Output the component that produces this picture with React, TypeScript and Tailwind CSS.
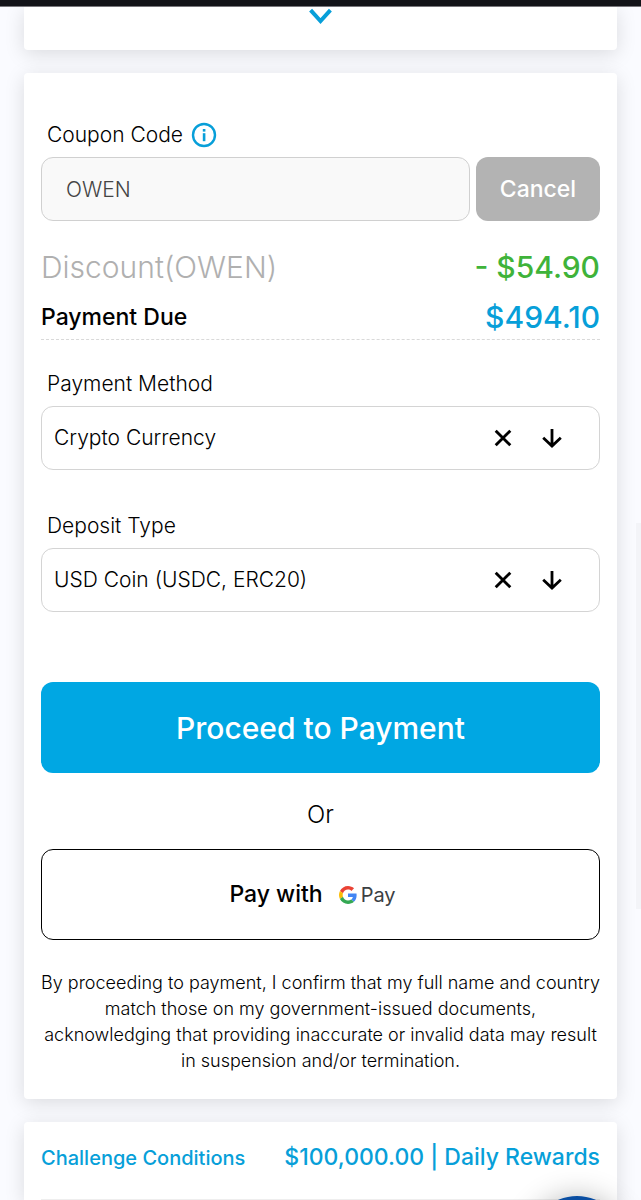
import React, { useState } from "react";

function ChevronDown() {
  return (
    <svg width="26" height="18" viewBox="0 0 26 18" fill="none" aria-hidden="true">
      <path d="M2.6 3.2 L12.5 14 L22.4 3.2" stroke="#079fd9" strokeWidth="4" />
    </svg>
  );
}

function InfoIcon() {
  return (
    <svg width="26" height="26" viewBox="0 0 26 26" fill="none" aria-hidden="true">
      <circle cx="13" cy="13" r="11" stroke="#079fd9" strokeWidth="2.4" />
      <rect x="11.8" y="11.2" width="2.6" height="8" fill="#079fd9" />
      <rect x="11.8" y="7" width="2.6" height="2.6" fill="#079fd9" />
    </svg>
  );
}

function CloseIcon() {
  return (
    <svg width="20" height="20" viewBox="0 0 20 20" fill="none" aria-hidden="true">
      <path d="M2.7 2.7 L17.3 17.3 M17.3 2.7 L2.7 17.3" stroke="#000" strokeWidth="2.9" />
    </svg>
  );
}

function ArrowDownIcon() {
  return (
    <svg width="20" height="20" viewBox="0 0 20 20" fill="none" aria-hidden="true">
      <path d="M10 1 V18 M1.2 9.8 L10 18 L18.8 9.8" stroke="#000" strokeWidth="2.8" />
    </svg>
  );
}

function GoogleG() {
  return (
    <svg width="18" height="18" viewBox="0 0 48 48" aria-hidden="true">
      <path fill="#EA4335" d="M24 9.5c3.54 0 6.71 1.22 9.21 3.6l6.85-6.85C35.9 2.38 30.47 0 24 0 14.62 0 6.51 5.38 2.56 13.22l7.98 6.19C12.43 13.72 17.74 9.5 24 9.5z" />
      <path fill="#4285F4" d="M46.98 24.55c0-1.57-.15-3.09-.38-4.55H24v9.02h12.94c-.58 2.96-2.26 5.48-4.78 7.18l7.73 6c4.51-4.18 7.09-10.36 7.09-17.65z" />
      <path fill="#FBBC05" d="M10.53 28.59c-.48-1.45-.76-2.99-.76-4.59s.27-3.14.76-4.59l-7.98-6.19C.92 16.46 0 20.12 0 24c0 3.88.92 7.54 2.56 10.78l7.97-6.19z" />
      <path fill="#34A853" d="M24 48c6.48 0 11.93-2.13 15.89-5.81l-7.73-6c-2.15 1.45-4.92 2.3-8.16 2.3-6.26 0-11.57-4.22-13.47-9.91l-7.98 6.19C6.51 42.62 14.62 48 24 48z" />
    </svg>
  );
}

type PickerProps = { id: string; label: string; options: string[] };

function Picker({ id, label, options }: PickerProps) {
  const [value, setValue] = useState(options[0]);
  return (
    <div>
      <label htmlFor={id} className="block px-1.5 text-[21px] leading-7 font-light">
        {label}
      </label>
      <div className="mt-2 flex h-16 items-center rounded-xl border border-[#d4d4d4] pr-[37px]">
        <select
          id={id}
          value={value}
          onChange={(e) => setValue(e.target.value)}
          className="h-full min-w-0 flex-1 appearance-none bg-transparent pl-3 text-[21px] font-light outline-none"
        >
          <option value="" />
          {options.map((o) => (
            <option key={o}>{o}</option>
          ))}
        </select>
        <button type="button" aria-label={`Clear ${label}`} onClick={() => setValue("")}>
          <CloseIcon />
        </button>
        <span className="pointer-events-none ml-[29px]">
          <ArrowDownIcon />
        </span>
      </div>
    </div>
  );
}

const card = "rounded bg-white shadow-[0_4px_20px_rgba(0,0,0,0.13)]";

export default function App() {
  const [coupon, setCoupon] = useState("OWEN");
  return (
    <div className="relative flex min-h-screen flex-col overflow-hidden bg-[#fafbff] font-['Inter','Liberation_Sans',sans-serif] text-black">
      <header className="relative z-10 h-[7px] border-b border-[#77767b] bg-[#121318]" />

      <main className="flex flex-1 flex-col gap-[23px] px-6">
        <section className="flex h-[43px] justify-center rounded-b bg-white shadow-[0_4px_20px_rgba(0,0,0,0.13)]">
          <button type="button" aria-label="Expand" className="h-[18px]">
            <ChevronDown />
          </button>
        </section>

        <section className={`${card} px-[17px] pt-12 pb-[25px]`}>
          <div className="flex items-center gap-2 px-1.5">
            <label htmlFor="coupon" className="text-[21px] leading-7 font-light">
              Coupon Code
            </label>
            <button type="button" aria-label="Coupon information">
              <InfoIcon />
            </button>
          </div>
          <div className="mt-2 flex gap-1.5">
            <input
              id="coupon"
              value={coupon}
              onChange={(e) => setCoupon(e.target.value)}
              className="h-16 min-w-0 flex-1 rounded-xl border border-[#d0d0d0] bg-[#f9f9f9] px-6 text-[21px] font-light text-[#444444] outline-none"
            />
            <button type="button" className="h-16 w-31 rounded-xl bg-[#b3b3b3] text-[23px] font-medium text-white">
              Cancel
            </button>
          </div>

          <dl className="mt-5 border-b border-dashed border-[#d9d9d9]">
            <div className="flex h-[52px] items-center justify-between">
              <dt className="text-3xl font-light text-[#b0b0b0]">Discount(OWEN)</dt>
              <dd className="text-3xl font-medium text-[#3fb33a]">- $54.90</dd>
            </div>
            <div className="flex h-[46px] items-center justify-between pt-0.5">
              <dt className="text-[23px] font-medium">Payment Due</dt>
              <dd className="text-3xl font-medium text-[#079fd9]">$494.10</dd>
            </div>
          </dl>

          <div className="mt-[30px] flex flex-col gap-[42px]">
            <Picker id="method" label="Payment Method" options={["Crypto Currency", "Credit Card"]} />
            <Picker id="deposit" label="Deposit Type" options={["USD Coin (USDC, ERC20)", "Bitcoin (BTC)"]} />
          </div>

          <button type="button" className="mt-[70px] h-[91px] w-full rounded-xl bg-[#00a7e3] text-3xl font-medium text-white">
            Proceed to Payment
          </button>
          <p className="pt-[26px] pb-[18px] text-center text-2xl leading-8 font-light">Or</p>
          <button
            type="button"
            className="flex h-[91px] w-full items-center justify-center gap-4 rounded-xl border border-black pr-4 text-[23px] font-medium"
          >
            Pay with
            <span className="flex items-center gap-1 text-xl font-normal text-[#3c4043]">
              <GoogleG />
              Pay
            </span>
          </button>

          <p className="mt-[30px] text-center text-lg leading-[26px] font-light">
            By proceeding to payment, I confirm that my full name and country match those on my government-issued
            documents, acknowledging that providing inaccurate or invalid data may result in suspension and/or
            termination.
          </p>
        </section>

        <section className="flex-1 rounded-t bg-white px-[17px] shadow-[0_4px_20px_rgba(0,0,0,0.13)]">
          <div className="flex h-[78px] items-center justify-between border-b border-[#eeeeee] pb-1.5 text-[#079fd9]">
            <h2 className="text-xl font-medium">Challenge Conditions</h2>
            <p className="text-[23px] font-medium">$100,000.00 | Daily Rewards</p>
          </div>
        </section>
      </main>

      <div className="pointer-events-none fixed top-[523px] right-0 h-[386px] w-[5px] bg-[#f3f4f8]" />
      <button
        type="button"
        aria-label="Open chat"
        className="absolute right-[17px] -bottom-[90px] size-[94px] rounded-full bg-[#0a4ea2] shadow-[0_2px_30px_rgba(0,0,0,0.3)]"
      />
    </div>
  );
}
